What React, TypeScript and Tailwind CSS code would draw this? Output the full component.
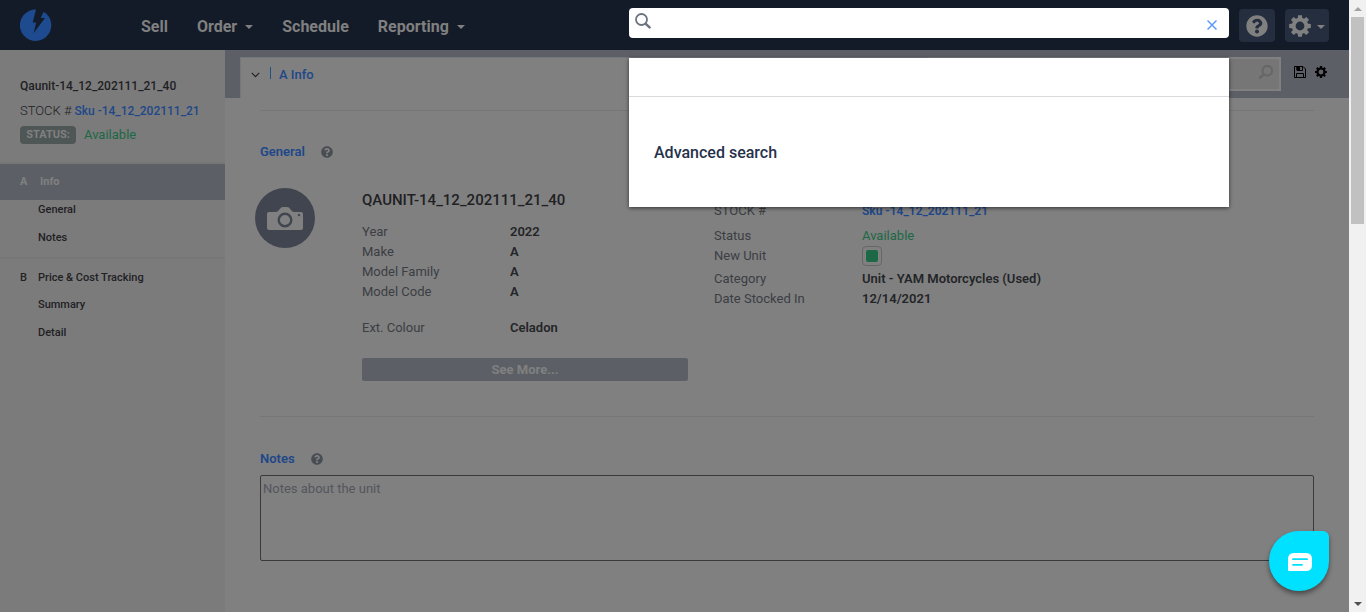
import React from "react";
import { FaQuestionCircle } from "react-icons/fa";

function Logo() {
  return (
    <svg viewBox="0 0 32 32" className="size-8" aria-hidden="true">
      <path
        fill="#1e4a8f"
        d="M16 0.5 L12.7 13.6 H16.2 L13.7 24 L25 8.9 H20.8 L23.4 3 A16 16 0 0 1 26.4 4.8 A15.7 15.7 0 1 1 16 0.5 Z"
      />
    </svg>
  );
}

const TEETH = [0, 45, 90, 135, 180, 225, 270, 315];

function Gear({ className }: { className: string }) {
  return (
    <svg viewBox="0 0 24 24" className={className} aria-hidden="true">
      <circle cx="12" cy="12" r="6.9" fill="none" stroke="currentColor" strokeWidth="4.2" />
      {TEETH.map((angle) => (
        <path
          key={angle}
          d="M9.4 4.5 L9.9 0.2 H14.1 L14.6 4.5 Z"
          fill="currentColor"
          transform={`rotate(${angle} 12 12)`}
        />
      ))}
    </svg>
  );
}

function Caret({ className = "" }: { className?: string }) {
  return (
    <svg viewBox="0 0 8 4" className={`h-1 w-2 ${className}`} aria-hidden="true">
      <path d="M0 0 H8 L4 4 Z" fill="currentColor" />
    </svg>
  );
}

function Magnifier({ className, width }: { className: string; width: number }) {
  return (
    <svg viewBox="0 0 16 16" className={className} aria-hidden="true">
      <circle cx="6.5" cy="6.5" r="5.5" fill="none" stroke="currentColor" strokeWidth={width} />
      <path d="M10.8 10.8 L14.6 14.4" stroke="currentColor" strokeWidth={width + 0.6} strokeLinecap="round" />
    </svg>
  );
}

function Camera() {
  return (
    <svg viewBox="0 0 36 24" className="h-6 w-9" aria-hidden="true">
      <path
        fill="#808080"
        d="M2 6 H9 Q11 5.6 12.6 3.2 Q14 1 16 1 H20 Q22 1 23.4 3.2 Q25 5.6 27 6 H34 Q36 6 36 8 V22 Q36 24 34 24 H2 Q0 24 0 22 V8 Q0 6 2 6 Z"
      />
      <circle cx="18" cy="14" r="6.3" fill="#808080" stroke="#40454f" strokeWidth="2.4" />
      <circle cx="32" cy="9" r="1.2" fill="#40454f" />
    </svg>
  );
}

function Floppy() {
  return (
    <svg viewBox="0 0 12 12" className="size-3" fill="none" stroke="#000" aria-hidden="true">
      <path d="M0.5 0.5 H9 L11.5 3 V11.5 H0.5 Z" />
      <path d="M3 1 V4.5 H8.5 V1 M2.5 11.5 V7.5 H9.5 V11.5" />
      <path d="M3 1 H5.5 V4 H3 Z" fill="#000" />
    </svg>
  );
}

function Row({ label, children, className = "" }: { label: string; children: React.ReactNode; className?: string }) {
  return (
    <div className={`flex h-5 items-center ${className}`}>
      <dt className="w-37 shrink-0 text-[#3b3e43]">{label}</dt>
      <dd className="whitespace-nowrap font-semibold text-[#232528]">{children}</dd>
    </div>
  );
}

function SectionTitle({ children }: { children: React.ReactNode }) {
  return (
    <div className="flex h-5 items-center gap-4">
      <h2 className="text-[13px] font-semibold text-[#1e4789]">{children}</h2>
      <button type="button" aria-label="Section help" className="text-[#484c53]">
        <FaQuestionCircle className="size-3" />
      </button>
    </div>
  );
}

function Header() {
  return (
    <header className="flex h-[50px] items-start bg-[#141b28] pr-5 pl-5 text-[#808080]">
      <a href="#home" aria-label="Home" className="mt-[9px] w-[121px] shrink-0">
        <Logo />
      </a>
      <nav className="flex h-[54px] items-center gap-[29px] text-base font-bold">
        <a href="#sell">Sell</a>
        <button type="button" className="flex items-center gap-2">
          Order <Caret />
        </button>
        <a href="#schedule">Schedule</a>
        <button type="button" className="flex items-center gap-2">
          Reporting <Caret />
        </button>
      </nav>
      <div className="relative mt-2 ml-auto h-[30px] w-[600px] text-[#6b7280]">
        <input
          type="text"
          aria-label="Search"
          className="h-[30px] w-full rounded bg-white pr-9 pl-8 text-sm text-[#26324b] outline-none"
        />
        <Magnifier className="absolute top-[5px] left-1.5 size-4" width={1.8} />
        <button type="button" aria-label="Clear search" className="absolute top-3 right-3 text-[#5b9cf8]">
          <svg viewBox="0 0 10 10" className="size-2.5" stroke="currentColor" strokeWidth="1.5" aria-hidden="true">
            <path d="M0.5 0.5 L9.5 9.5 M9.5 0.5 L0.5 9.5" />
          </svg>
        </button>
        <div className="absolute top-[50px] right-0 left-0 z-10 h-[149px] bg-white shadow-[0_1px_4px_rgba(0,0,0,0.6)]">
          <div className="h-[39px] border-b border-[#d9dadc]" />
          <a href="#advanced" className="mt-11 ml-[25px] inline-block text-base leading-6 font-medium text-[#26324b]">
            Advanced search
          </a>
        </div>
      </div>
      <button
        type="button"
        aria-label="Help"
        className="mt-[9px] ml-2.5 flex h-[33px] w-9 shrink-0 items-center justify-center rounded bg-[#252e3e]"
      >
        <FaQuestionCircle className="size-[22px]" />
      </button>
      <button
        type="button"
        aria-label="Settings"
        className="mt-[9px] ml-2.5 flex h-[33px] w-11 shrink-0 items-center gap-1.5 rounded bg-[#252e3e] pl-1"
      >
        <Gear className="size-[22px]" />
        <Caret className="mt-0.5" />
      </button>
    </header>
  );
}

function Sidebar() {
  return (
    <aside className="w-[225px] shrink-0 bg-[#7b7b7b] text-[11px] font-medium text-[#1f2124]">
      <div className="h-[114px] border-b-2 border-[#767676] pt-[26px] pl-5">
        <p className="text-[12px] leading-5 whitespace-nowrap">Qaunit-14_12_202111_21_40</p>
        <p className="mt-[5px] text-[12px] leading-5 whitespace-nowrap">
          <span className="text-[13px] font-light">STOCK #</span>{" "}
          <a href="#sku" className="font-medium text-[#1e4789]">Sku -14_12_202111_21</a>
        </p>
        <p className="mt-1 flex h-5 items-center gap-2">
          <span className="flex h-[18px] w-14 items-center justify-center rounded bg-[#4f5656] text-[11px] font-bold text-[#808080]">
            STATUS:
          </span>
          <span className="text-[13px] font-normal text-[#1d6846]">Available</span>
        </p>
      </div>
      <nav>
        <a href="#info" className="flex h-9 items-center bg-[#5c6066] pl-5 font-bold text-[#808080]">
          <span className="w-5">A</span>Info
        </a>
        <a href="#general" className="flex h-5 items-center pl-[38px]">General</a>
        <a href="#notes" className="mt-2 flex h-5 items-center pl-[38px]">Notes</a>
        <div className="mt-[9px] border-t-2 border-[#767676] pt-[9px]">
          <a href="#price" className="flex h-5 items-center pl-5">
            <span className="w-[18px]">B</span>Price &amp; Cost Tracking
          </a>
          <a href="#summary" className="mt-[7px] flex h-5 items-center pl-[38px]">Summary</a>
          <a href="#detail" className="mt-2 flex h-5 items-center pl-[38px]">Detail</a>
        </div>
      </nav>
    </aside>
  );
}

function TabBar() {
  return (
    <div className="flex h-12 items-start bg-[#5c6066] pl-[15px]">
      <div className="mt-[7px] flex h-[41px] flex-1 items-start border-t border-l border-[#74777a] bg-[#808080] pt-2 pl-2.5">
        <button type="button" className="flex h-[18px] items-center text-[13px] font-medium text-[#1e4789]">
          <svg viewBox="0 0 9 6" className="mr-2.5 h-1.5 w-[9px]" fill="none" stroke="#222" strokeWidth="1.2" aria-hidden="true">
            <path d="M0.8 0.8 L4.5 4.6 L8.2 0.8" />
          </svg>
          <span className="mr-2 mb-1 h-3 w-px bg-[#1f5480]" />
          A Info
        </button>
      </div>
      <div className="mt-[7px] mr-[13px] flex h-[34px] w-[353px] items-center border-2 border-[#808080] bg-[#767676] pr-1.5">
        <input type="text" aria-label="Filter sections" className="h-full min-w-0 flex-1 bg-transparent px-2 text-sm outline-none" />
        <button type="button" aria-label="Filter" className="-scale-x-100 pb-1 text-[#666666]">
          <Magnifier className="size-3.5" width={2.3} />
        </button>
      </div>
      <div className="mt-4 mr-[22px] flex items-center gap-[9px] text-black">
        <button type="button" aria-label="Save"><Floppy /></button>
        <button type="button" aria-label="Options"><Gear className="size-3" /></button>
      </div>
    </div>
  );
}

function Content() {
  return (
    <main className="min-w-0 flex-1 bg-[#808080]">
      <TabBar />
      <div className="pt-3 pr-[35px] pl-[35px] text-[13px]">
        <section className="h-[306px] border-t border-[#767676] pt-[31px]">
          <SectionTitle>General</SectionTitle>
          <div className="mt-[26px] grid grid-cols-[102px_352fr_600fr]">
            <div className="-ml-[5px] flex size-15 items-center justify-center rounded-full bg-[#40454f]">
              <Camera />
            </div>
            <div className="pr-[26px]">
              <h3 className="text-[15px] leading-6 font-medium whitespace-nowrap text-[#1f2124]">QAUNIT-14_12_202111_21_40</h3>
              <dl className="mt-2.5">
                <Row label="Year">2022</Row>
                <Row label="Make">A</Row>
                <Row label="Model Family">A</Row>
                <Row label="Model Code">A</Row>
                <Row label="Ext. Colour" className="mt-4">Celadon</Row>
              </dl>
              <button type="button" className="mt-5 h-[23px] w-full rounded-xs bg-[#5c6066] text-[13px] font-bold text-[#808080]">
                See More...
              </button>
            </div>
            <dl className="pt-[13px]">
              <Row label="STOCK #">
                <a href="#sku" className="text-[12px] font-semibold text-[#1e4789]">Sku -14_12_202111_21</a>
              </Row>
              <Row label="Status" className="mt-[5px]">
                <span className="font-normal text-[#1d6846]">Available</span>
              </Row>
              <Row label="New Unit">
                <input
                  type="checkbox"
                  defaultChecked
                  aria-label="New Unit"
                  className="grid size-5 appearance-none place-content-center rounded border border-[#666] align-middle before:size-3 before:rounded-xs checked:before:bg-[#1d6846]"
                />
              </Row>
              <Row label="Category" className="mt-[3px]">Unit - YAM Motorcycles (Used)</Row>
              <Row label="Date Stocked In">12/14/2021</Row>
            </dl>
          </div>
        </section>
        <section className="border-t border-[#767676] pt-8">
          <SectionTitle>Notes</SectionTitle>
          <textarea
            aria-label="Notes"
            placeholder="Notes about the unit"
            className="mt-1.5 block h-[86px] w-full resize-none rounded-xs border border-[#3a3a3a] px-0.5 py-[3px] text-[13px] leading-5 placeholder:text-[#53565c]"
          />
        </section>
      </div>
    </main>
  );
}

function Scrollbar() {
  return (
    <div className="flex w-[17px] shrink-0 flex-col items-center justify-between bg-[#f1f1f1]" aria-hidden="true">
      <div className="flex flex-col items-center">
        <span className="flex h-[17px] items-center"><Caret className="rotate-180 text-[#a3a3a3]" /></span>
        <span className="h-[207px] w-[13px] bg-[#c1c1c1]" />
      </div>
      <span className="flex h-[17px] items-center"><Caret className="text-[#505050]" /></span>
    </div>
  );
}

export default function App() {
  return (
    <div className="flex min-h-screen font-['Roboto','Liberation_Sans',sans-serif]">
      <div className="flex min-w-0 flex-1 flex-col">
        <Header />
        <div className="flex flex-1">
          <Sidebar />
          <Content />
        </div>
      </div>
      <Scrollbar />
      <button
        type="button"
        aria-label="Open chat"
        className="fixed right-[37px] bottom-[21px] z-20 flex size-15 items-center justify-center rounded-[30px] rounded-tr-md bg-[#00e0ff] pt-0.5 pl-0.5 shadow-[0_3px_5px_rgba(0,0,0,0.45)]"
      >
        <svg viewBox="0 0 24 18" className="h-[18px] w-6" aria-hidden="true">
          <path fill="#fff" d="M6 0 H18 Q24 0 24 6 V12 Q24 18 18 18 H1 Q0 18 0 17 V6 Q0 0 6 0 Z" />
          <path stroke="#00e0ff" strokeWidth="1.8" strokeLinecap="round" d="M5 6.2 H19 M5 11.8 H14" />
        </svg>
      </button>
    </div>
  );
}
